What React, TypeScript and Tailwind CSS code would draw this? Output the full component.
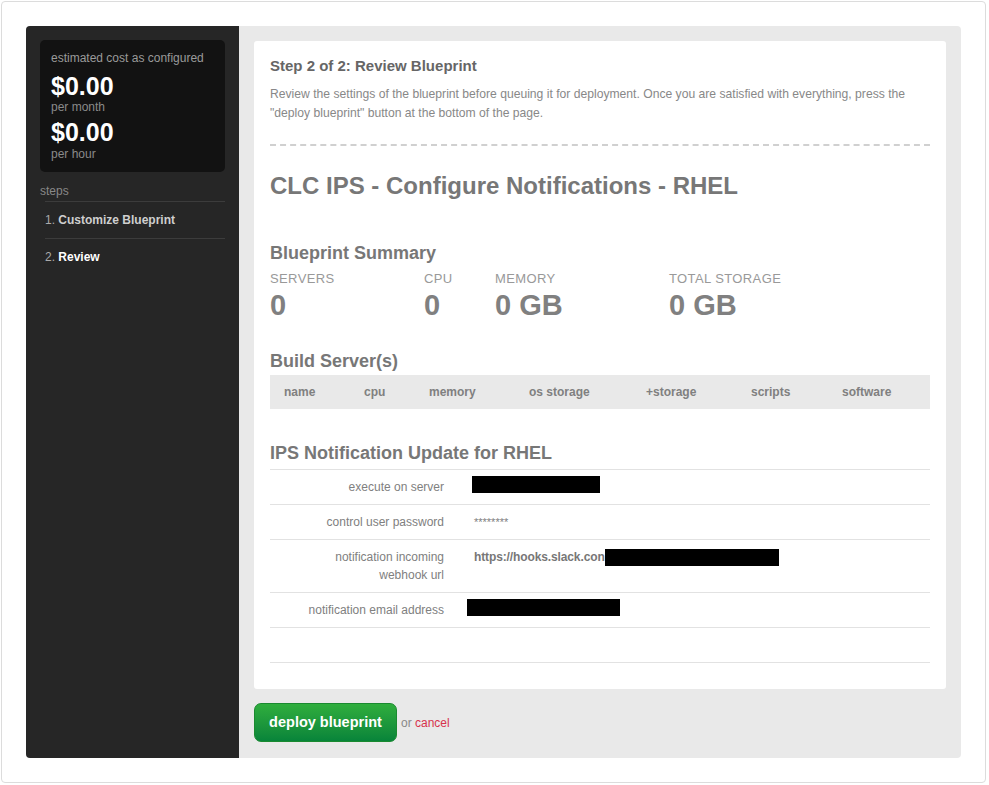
const font = { fontFamily: '"Liberation Sans", Arial, sans-serif' };

const stats = [
  { label: 'Servers', value: '0', w: 'w-[154px]' },
  { label: 'CPU', value: '0', w: 'w-[71px]' },
  { label: 'Memory', value: '0 GB', w: 'w-[174px]' },
  { label: 'Total Storage', value: '0 GB', w: 'w-[150px]' },
];

const cols = [
  ['name', 'w-[80px]'],
  ['cpu', 'w-[65px]'],
  ['memory', 'w-[100px]'],
  ['os storage', 'w-[117px]'],
  ['+storage', 'w-[105px]'],
  ['scripts', 'w-[91px]'],
  ['software', 'w-[80px]'],
];

function Redacted({ w }: { w: string }) {
  return <span className={`inline-block h-[17px] bg-black ${w}`} />;
}

export default function App() {
  return (
    <div className="min-h-[785px] w-[989px] bg-white p-px" style={font}>
      <div className="h-[782px] w-[985px] rounded-[4px] border border-[#dcdcdc] bg-white pt-6 pl-[24px]">
        <div className="flex h-[732px] w-[935px] overflow-hidden rounded-[4px] bg-[#e9e9e9]">
          {/* sidebar */}
          <aside className="w-[213px] shrink-0 bg-[#262626] px-[14px] pt-[14px]">
            <div className="rounded-[5px] bg-[#121212] px-[11px] pt-[11px] pb-[11px]">
              <p className="text-[12px] leading-[15px] text-[#9a9a9a]">estimated cost as configured</p>
              <p className="mt-[6px] text-[25px] font-bold leading-[28px] text-white">$0.00</p>
              <p className="text-[12px] leading-[14px] text-[#8a8a8a]">per month</p>
              <p className="mt-[4px] text-[25px] font-bold leading-[28px] text-white">$0.00</p>
              <p className="mt-[1px] text-[12px] leading-[14px] text-[#8a8a8a]">per hour</p>
            </div>
            <p className="mt-[12px] text-[12px] leading-[15px] text-[#888]">steps</p>
            <ul className="ml-[5px] mt-[2px]">
              <li className="border-t border-[#3c3c3c] py-[10px] text-[12px] font-bold leading-[16px] text-[#cfcfcf]">
                <span className="font-normal text-[#aaa]">1. </span>Customize Blueprint
              </li>
              <li className="border-t border-[#3c3c3c] py-[10px] text-[12px] font-bold leading-[16px] text-white">
                <span className="font-normal text-[#aaa]">2. </span>Review
              </li>
            </ul>
          </aside>

          {/* main */}
          <main className="flex-1 px-[15px] pt-[15px]">
            <div className="h-[648px] w-[692px] rounded-[3px] bg-white px-[16px] pt-[15px]">
              <h3 className="text-[15px] font-bold leading-[20px] text-[#666]">Step 2 of 2: Review Blueprint</h3>
              <p className="mt-[9px] text-[12.15px] leading-[19px] text-[#888]">
                Review the settings of the blueprint before queuing it for deployment. Once you are satisfied with everything, press the
                "deploy blueprint" button at the bottom of the page.
              </p>
              <div className="mt-[21px] border-t-2 border-dashed border-[#d0d0d0]" />
              <h1 className="mt-[25px] text-[24px] font-bold leading-[30px] text-[#777]">CLC IPS - Configure Notifications - RHEL</h1>

              <h2 className="mt-[41px] text-[18px] font-bold leading-[22px] text-[#777]">Blueprint Summary</h2>
              <div className="mt-[7px] flex">
                {stats.map((s) => (
                  <div key={s.label} className={s.w}>
                    <p className="text-[13px] uppercase leading-[16px] tracking-[0.03em] text-[#999]">{s.label}</p>
                    <p className="mt-[1px] text-[29px] font-bold leading-[34px] text-[#808080]">{s.value}</p>
                  </div>
                ))}
              </div>

              <h2 className="mt-[28px] text-[18px] font-bold leading-[22px] text-[#777]">Build Server(s)</h2>
              <div className="mt-[3px] flex h-[34px] items-center bg-[#e9e9e9] pl-[14px]">
                {cols.map(([c, w]) => (
                  <span key={c} className={`${w} text-[12px] font-bold text-[#808080]`}>{c}</span>
                ))}
              </div>

              <h2 className="mt-[33px] text-[18px] font-bold leading-[22px] text-[#777]">IPS Notification Update for RHEL</h2>
              <div className="mt-[5px] border-t border-[#e2e2e2] text-[12px] text-[#808080]">
                <div className="flex h-[35px] items-center border-b border-[#e2e2e2]">
                  <span className="w-[174px] text-right">execute on server</span>
                  <span className="ml-[28px]"><Redacted w="w-[128px]" /></span>
                </div>
                <div className="flex h-[35px] items-center border-b border-[#e2e2e2]">
                  <span className="w-[174px] text-right">control user password</span>
                  <span className="ml-[30px] text-[11px]">********</span>
                </div>
                <div className="flex h-[53px] items-start border-b border-[#e2e2e2] pt-[8px]">
                  <span className="w-[174px] text-right leading-[18px]">notification incoming<br />webhook url</span>
                  <span className="ml-[30px] flex items-center font-bold leading-[18px] tracking-[-0.01em] text-[#777]">
                    https://hooks.slack.con<Redacted w="w-[174px]" />
                  </span>
                </div>
                <div className="flex h-[35px] items-center border-b border-[#e2e2e2]">
                  <span className="w-[174px] text-right">notification email address</span>
                  <span className="ml-[23px]"><Redacted w="w-[153px]" /></span>
                </div>
                <div className="h-[35px] border-b border-[#e2e2e2]" />
              </div>
            </div>

            <div className="mt-[14px] flex items-center">
              <button className="h-[39px] w-[143px] rounded-[7px] border border-[#1a8a30] bg-gradient-to-b from-[#2fae3d] to-[#07843a] text-[14.5px] font-bold text-white">
                deploy blueprint
              </button>
              <span className="ml-[4px] text-[12px] text-[#888]">
                or <a className="text-[#d7334d]">cancel</a>
              </span>
            </div>
          </main>
        </div>
      </div>
    </div>
  );
}
